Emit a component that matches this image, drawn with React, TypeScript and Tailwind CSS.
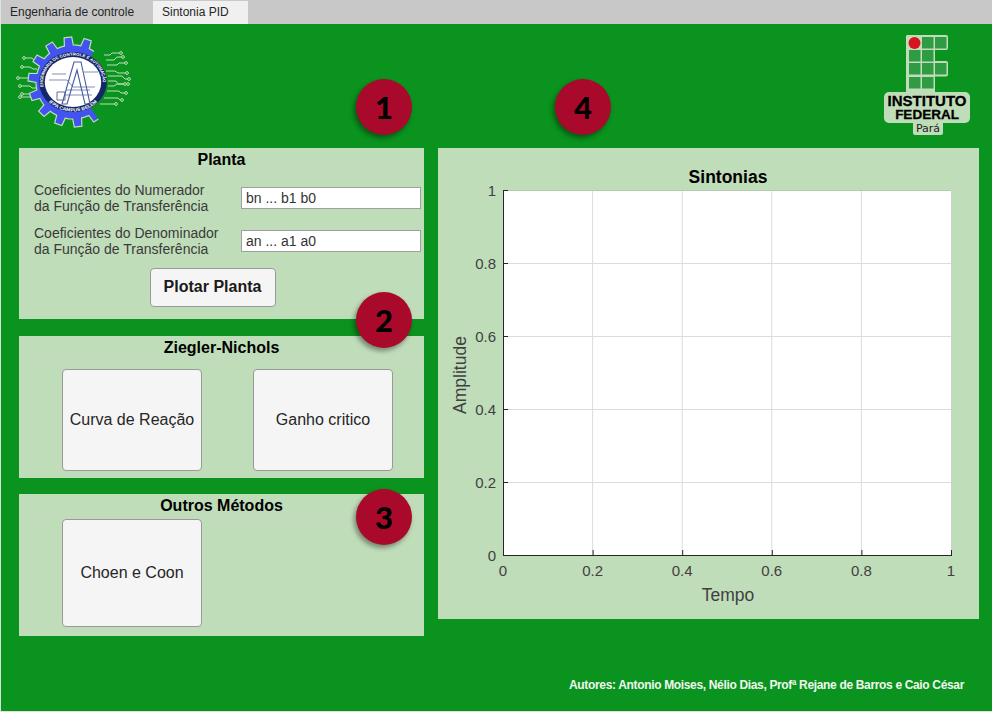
import React from 'react';

const font = { fontFamily: '"Liberation Sans", Arial, sans-serif' };

// gear outline used by the course logo
const gearPath = (() => {
  const cx = 57, cy = 46, teeth = 14, outer = 45, inner = 37;
  const pts: string[] = [];
  for (let i = 0; i < teeth; i++) {
    const a = (i / teeth) * Math.PI * 2 + 0.11;
    const step = (Math.PI * 2) / teeth;
    const list: [number, number][] = [
      [inner, a - step * 0.5],
      [inner, a - step * 0.27],
      [outer, a - step * 0.19],
      [outer, a + step * 0.19],
      [inner, a + step * 0.27],
    ];
    list.forEach(([r, t]) => pts.push(`${(cx + r * Math.cos(t)).toFixed(1)},${(cy + r * Math.sin(t)).toFixed(1)}`));
  }
  return 'M' + pts.join('L') + 'Z';
})();

const traces = [
  'M88 19h6l2-2h9', 'M90 24h8l3-3h6', 'M91 29h10l2-2h7', 'M90 35h9l3 2h9', 'M92 40h14l3 3h4',
  'M92 45h8l2 3h10', 'M92 50h6l3-2h8', 'M91 55h12l2 2h5', 'M88 62h14l2 2h2', 'M84 68h16',
  'M8 22h8l3 3h5', 'M6 31h8l3 2h4', 'M2 42h10l3-2h4', 'M4 50h10l2 2h4', 'M6 58h8l3-2h6', 'M4 61h12',
];
const dots: [number, number][] = [
  [105, 17], [107, 21], [110, 27], [111, 37], [113, 43], [112, 48], [109, 48], [110, 57], [106, 64], [100, 68],
  [8, 22], [6, 31], [2, 42], [4, 50], [6, 58], [4, 61],
];

const CourseLogo = () => (
  <svg width="116" height="94" viewBox="0 0 116 94" className="block">
    <defs>
      <clipPath id="gear-clip">
        <polygon points="-5,-5 92,-5 57,46 92,97 -5,97" />
      </clipPath>
      <path id="ring-top" d="M30.9 50.6A26.5 26.5 0 1 1 83.1 50.6" />
      <path id="ring-bottom" d="M27.5 46A29.5 29.5 0 0 0 86.5 46" />
    </defs>
    <g stroke="#c0ddb9" strokeWidth="1" fill="none">
      {traces.map((d) => <path key={d} d={d} />)}
      {dots.map(([x, y]) => <circle key={`${x}-${y}`} cx={x} cy={y} r="1.4" fill="#0a931e" />)}
    </g>
    <path d={gearPath} fill="#4353f0" stroke="#c0ddb9" strokeWidth="1.2" clipPath="url(#gear-clip)" />
    <g transform="translate(57 46) scale(1.13 1) translate(-57 -46)">
      <circle cx="57" cy="46" r="30" fill="#15276b" />
      <circle cx="57" cy="46" r="25" fill="#fff" />
      <text fontSize="4" fontWeight="700" fill="#fff" style={font}>
        <textPath href="#ring-top" startOffset="0">ENGENHARIA DE CONTROLE E AUTOMAÇÃO</textPath>
      </text>
      <text fontSize="4.6" fontWeight="700" fill="#fff" style={font} textAnchor="middle">
        <textPath href="#ring-bottom" startOffset="50%">IFPA CAMPUS BELÉM</textPath>
      </text>
    </g>
    <g stroke="#4a5c9c" fill="none" strokeWidth="1.1">
      <path d="M46 68 58 26h7l9 42h-5L61 34l-10 34Z" />
      <path d="M50 54h24M48 59h28M33 44h18l6 7h22M36 38h14M68 36h14" strokeWidth="0.7" />
      <path d="M41 56h8v8h-8Z" strokeWidth="0.9" />
    </g>
  </svg>
);

const IfLogo = () => {
  const cells: [number, number][] = [
    [1, 0], [2, 0], [0, 1], [1, 1], [0, 2], [1, 2], [2, 2], [0, 3], [1, 3],
  ];
  const rowY = [2, 15, 28, 42];
  return (
    <svg width="86" height="101" viewBox="0 0 86 101" className="block -mt-px">
      <rect x="22" y="0" width="29" height="60" rx="2" fill="#c0ddb9" />
      <rect x="22" y="0" width="42" height="15" rx="2" fill="#c0ddb9" />
      <rect x="22" y="26" width="42" height="15.5" rx="2" fill="#c0ddb9" />
      <rect x="0" y="57" width="86" height="31" rx="5" fill="#c0ddb9" />
      <rect x="29" y="85" width="30" height="15" rx="2" fill="#c0ddb9" />
      {cells.map(([c, r]) => (
        <rect key={`${c}-${r}`} x={25 + c * 13} y={rowY[r]} width="11.5" height="11.5" fill="#2f9b42" />
      ))}
      <circle cx="30.5" cy="8" r="6" fill="#d8141f" />
      <g style={font} fontWeight="700" fill="#000" stroke="#000" strokeWidth="0.3" textAnchor="middle">
        <text x="43" y="71" fontSize="15">INSTITUTO</text>
        <text x="43" y="84" fontSize="13.5">FEDERAL</text>
      </g>
      <text x="44" y="97" textAnchor="middle" fontSize="11" fill="#222" style={{ fontFamily: '"DejaVu Sans", sans-serif' }}>Pará</text>
    </svg>
  );
};

const Badge = ({ n, className }: { n: string; className: string }) => (
  <div
    className={`absolute w-14 h-14 rounded-full bg-[#a90a2b] flex items-center justify-center text-black text-[31px] font-black shadow-[-2px_3px_5px_rgba(0,0,0,0.4)] ${className}`}
    style={{ fontFamily: 'Lato, sans-serif' }}
  >
    {n}
  </div>
);

const Panel = ({ title, className, children }: { title: string; className: string; children: React.ReactNode }) => (
  <section className={`bg-[#c0ddb9] ${className}`}>
    <h2 className="h-6 border-b border-[#c9d6c4] text-center text-base font-bold leading-6 text-black">{title}</h2>
    {children}
  </section>
);

const BigButton = ({ label, className }: { label: string; className: string }) => (
  <button className={`w-[140px] rounded border border-[#999] bg-[#f5f5f5] text-base text-[#262626] ${className}`}>{label}</button>
);

const CoefRow = ({ line1, placeholder }: { line1: string; placeholder: string }) => (
  <div className="flex items-center justify-between pl-[15px] pr-[3px]">
    <p className="text-sm leading-4 text-[#3a3a3a]">
      {line1}
      <br />
      da Função de Transferência
    </p>
    <div className="w-[180px] h-[22px] bg-white border border-[#a0a0a0] px-1 text-sm leading-5 text-[#333]">{placeholder}</div>
  </div>
);

const xTicks = [0, 0.2, 0.4, 0.6, 0.8, 1];

const Chart = () => {
  const L = 65, R = 513, T = 20, B = 385;
  const fx = (v: number) => L + (R - L) * v;
  const fy = (v: number) => B - (B - T) * v;
  const tickText = { fontSize: 15, fill: '#404040' };
  return (
    <svg width="541" height="447" viewBox="0 0 541 447" className="block" style={font}>
      <rect x={L} y={T} width={R - L} height={B - T} fill="#fff" />
      {xTicks.slice(1, 5).map((v) => (
        <line key={v} x1={fx(v)} x2={fx(v)} y1={T} y2={B} stroke="#dcdcdc" />
      ))}
      {xTicks.slice(1, 5).map((v) => (
        <line key={v} x1={L} x2={R} y1={fy(v) + 0.5} y2={fy(v) + 0.5} stroke="#dcdcdc" />
      ))}
      <line x1={L} x2={R} y1={T + 0.5} y2={T + 0.5} stroke="#b8c9b3" />
      <line x1={R + 0.5} x2={R + 0.5} y1={T} y2={B} stroke="#c8d6c4" />
      <path d={`M${L + 0.5} ${T}V${B + 0.5}H${R + 1}`} fill="none" stroke="#262626" />
      {xTicks.map((v) => (
        <React.Fragment key={v}>
          <line x1={fx(v) + 0.5} x2={fx(v) + 0.5} y1={B} y2={B - 5} stroke="#262626" />
          <line x1={L} x2={L + 5} y1={fy(v) + 0.5} y2={fy(v) + 0.5} stroke="#262626" />
          <text x={fx(v)} y={B + 21} textAnchor="middle" {...tickText}>{v}</text>
          <text x={L - 7} y={fy(v) + 6} textAnchor="end" {...tickText}>{v}</text>
        </React.Fragment>
      ))}
      <text x="290" y="431" textAnchor="middle" fontSize="17.5" fill="#404040">Tempo</text>
      <text transform="translate(28 205) rotate(-90)" textAnchor="middle" fontSize="17.5" fill="#404040">Amplitude</text>
    </svg>
  );
};

export default function App() {
  return (
    <div className="w-[992px] h-[712px] flex flex-col overflow-hidden" style={font}>
      {/* tabs */}
      <div className="h-6 flex bg-[#c8c8c8] border-l border-[#e0e0e0] text-xs text-[#262626]">
        <div className="w-[152px] pl-[9px] leading-[24px]">Engenharia de controle</div>
        <div className="w-[95px] mt-px pl-[9px] bg-[#f0f0f0] leading-[23px]">Sintonia PID</div>
      </div>

      <main className="relative flex-1 flex flex-col bg-[#0a931e] border-l border-b border-[#d8e6d4]">
        <Badge n="1" className="left-[355px] top-[55px]" />
        <Badge n="4" className="left-[554px] top-[55px]" />
        <Badge n="2" className="left-[355px] top-[268px]" />
        <Badge n="3" className="left-[355px] top-[465px]" />

        <header className="h-[124px] flex justify-between pl-[15px] pr-[22px] pt-3">
          <CourseLogo />
          <IfLogo />
        </header>

        <div className="flex gap-[14px] pl-[18px]">
          <div className="w-[405px] flex flex-col">
            <Panel title="Planta" className="h-[171px]">
              <div className="flex flex-col gap-[11px] pt-[10px]">
                <CoefRow line1="Coeficientes do Numerador" placeholder="bn ... b1 b0" />
                <CoefRow line1="Coeficientes do Denominador" placeholder="an ... a1 a0" />
              </div>
              <div className="flex justify-center pt-[11px] pr-[18px]">
                <button className="w-[126px] h-[39px] pb-0.5 rounded border border-[#999] bg-[#f5f5f5] text-base font-bold text-[#1a1a1a]">Plotar Planta</button>
              </div>
            </Panel>
            <Panel title="Ziegler-Nichols" className="h-[142px] mt-[17px]">
              <div className="flex gap-[51px] pl-[43px] pt-[9px]">
                <BigButton label="Curva de Reação" className="h-[102px]" />
                <BigButton label="Ganho critico" className="h-[102px]" />
              </div>
            </Panel>
            <Panel title="Outros Métodos" className="h-[142px] mt-4">
              <div className="pl-[43px] pt-px">
                <BigButton label="Choen e Coon" className="h-[108px]" />
              </div>
            </Panel>
          </div>

          <section className="w-[541px] h-[471px] bg-[#c0ddb9] self-start">
            <h2 className="pt-[21px] h-[22px] text-center text-[17.5px] font-bold leading-4 text-black pl-[39px]">Sintonias</h2>
            <Chart />
          </section>
        </div>

        <footer className="mt-auto pb-[18px] pr-[28px] text-right text-xs font-bold tracking-[-0.34px] text-[#f0f7ee]">
          Autores: Antonio Moises, Nélio Dias, Profª Rejane de Barros e Caio César
        </footer>
      </main>
    </div>
  );
}
